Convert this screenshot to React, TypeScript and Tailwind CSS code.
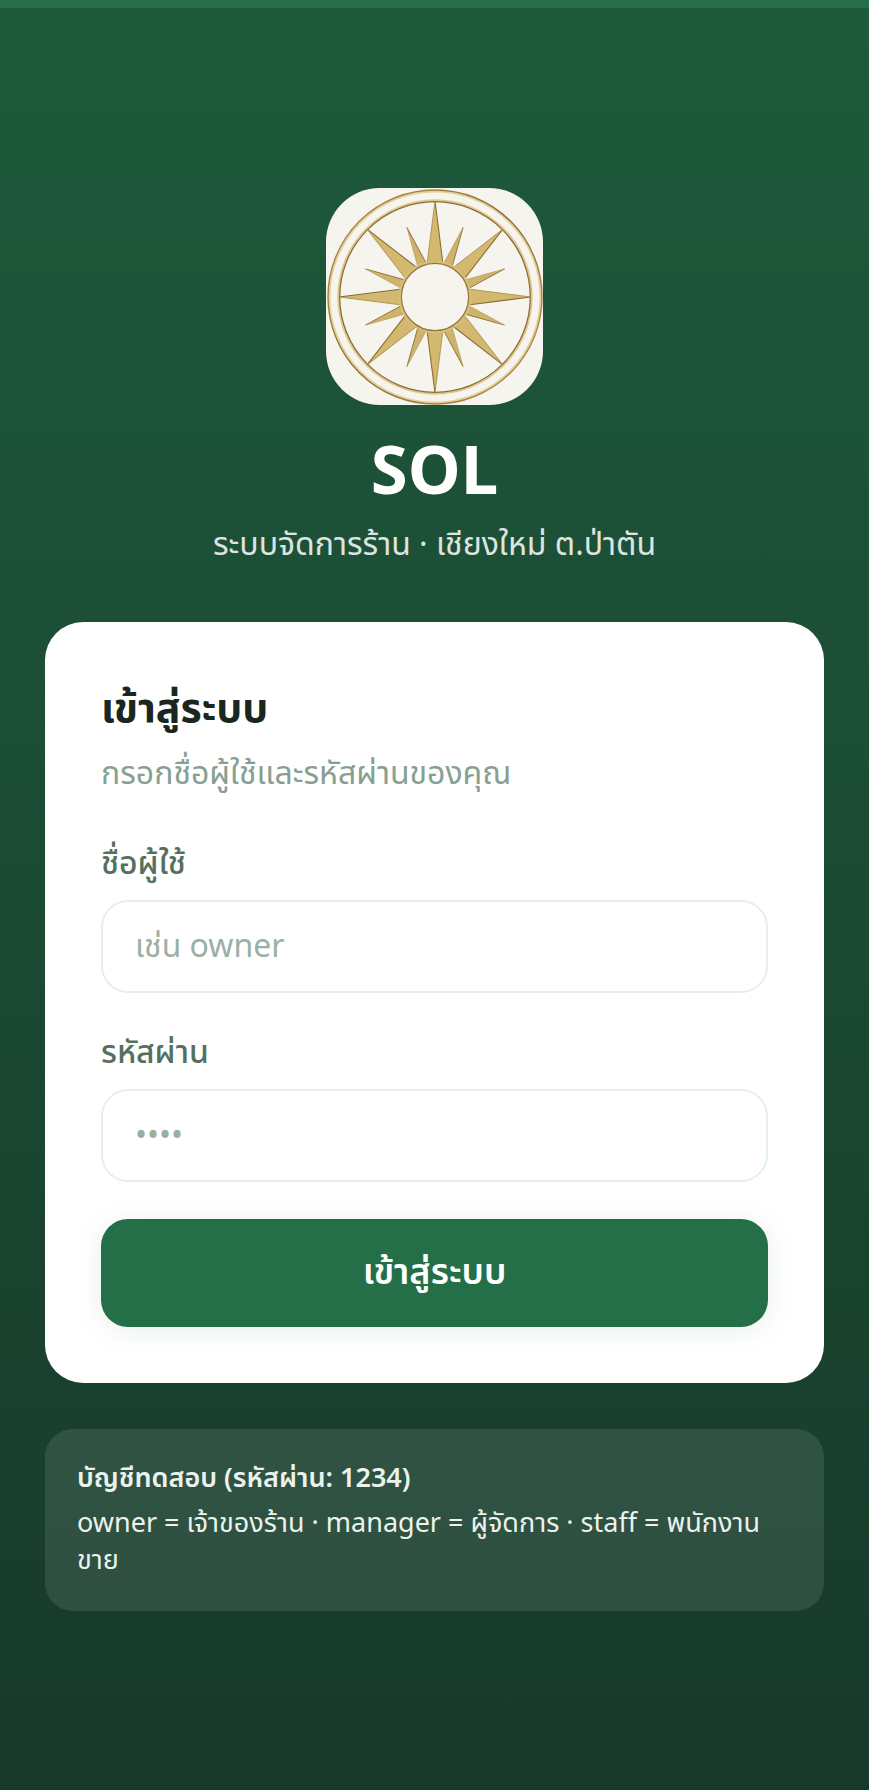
import { useState } from 'react';

const mainRays = [0, 45, 90, 135, 180, 225, 270, 315];
const minorRays = [22, 68, 112, 158, 202, 248, 292, 338];

const SunLogo = () => (
  <svg viewBox="0 0 217 217" className="block size-full" role="img" aria-label="SOL">
    <defs>
      <linearGradient id="gold" x1="0" y1="0" x2="1" y2="1">
        <stop offset="0" stopColor="#b8924a" />
        <stop offset="0.5" stopColor="#8f7038" />
        <stop offset="1" stopColor="#b8964f" />
      </linearGradient>
    </defs>
    <rect width="217" height="217" fill="#f6f4ef" />
    <circle cx="109" cy="109" r="105.8" fill="none" stroke="#e6d09a" strokeWidth="2.4" />
    <circle cx="109" cy="109" r="107" fill="none" stroke="url(#gold)" strokeWidth="1.4" />
    <circle cx="109" cy="109" r="96.6" fill="none" stroke="#dfc88c" strokeWidth="2.2" />
    <circle cx="109" cy="109" r="95.3" fill="none" stroke="#8a6d35" strokeWidth="1.3" />
    {minorRays.map(angle => (
      <g key={angle} transform={`rotate(${angle} 109 109)`}>
        <path d="M109 34 L104.5 74 H113.5 Z" fill="#cfb26b" />
        <path d="M109 34 L113.5 74" stroke="#8b753f" strokeWidth="0.9" />
        <path d="M109 34 L104.5 74" stroke="#b8974b" strokeWidth="0.6" />
      </g>
    ))}
    {mainRays.map(angle => (
      <g key={angle} transform={`rotate(${angle} 109 109)`}>
        <path d="M109 13 L101 76 H117 Z" fill="#d3b86f" />
        <path d="M109 13 L117 76" stroke="#8b6e31" strokeWidth="1.1" />
        <path d="M109 13 L101 76" stroke="#a98846" strokeWidth="0.8" />
      </g>
    ))}
    <circle cx="109" cy="109" r="34.8" fill="#f6f4ef" stroke="#d8bd7a" strokeWidth="3.4" />
    <circle cx="109" cy="109" r="33.6" fill="none" stroke="#94763b" strokeWidth="1.2" />
  </svg>
);

const fields = [
  { id: 'username', label: 'ชื่อผู้ใช้', type: 'text', placeholder: 'เช่น owner' },
  { id: 'password', label: 'รหัสผ่าน', type: 'password', placeholder: '••••' },
];

const App = () => {
  const [values, setValues] = useState<Record<string, string>>({ username: '', password: '' });

  return (
    <div className="min-h-screen flex flex-col border-t-8 border-[#246f48] bg-linear-to-b from-[#1e5a3c] via-[#1b4a33] to-[#17392a] font-['Noto_Sans','Noto_Sans_Thai',sans-serif]">
      <main className="grow flex flex-col justify-center px-[45px]">
        <header className="flex flex-col items-center text-center">
          <div className="size-[217px] rounded-[54px] overflow-hidden">
            <SunLogo />
          </div>
          <h1 className="mt-4 text-[67px] leading-[94px] font-bold text-white">SOL</h1>
          <p className="mt-1 text-[32px] leading-[48px] text-white/85">
            ระบบจัดการร้าน · เชียงใหม่ ต.ป่าตัน
          </p>
        </header>

        <form
          className="mt-[55px] rounded-[38px] bg-white p-14"
          onSubmit={e => e.preventDefault()}
        >
          <h2 className="text-[41px] leading-[56px] font-bold text-[#1a2721]">เข้าสู่ระบบ</h2>
          <p className="mt-[14px] mb-[42px] text-[32px] leading-[48px] text-[#87a092]">กรอกชื่อผู้ใช้และรหัสผ่านของคุณ</p>

          <div className="flex flex-col gap-[34px]">
            {fields.map(field => (
              <div key={field.id}>
                <label htmlFor={field.id} className="block text-[32px] leading-[48px] font-medium text-[#54715f]">
                  {field.label}
                </label>
                <input
                  id={field.id}
                  type={field.type}
                  placeholder={field.placeholder}
                  value={values[field.id]}
                  onChange={e => setValues({ ...values, [field.id]: e.target.value })}
                  className="mt-[14px] block w-full h-[93px] rounded-[27px] border-2 border-[#e4f1eb] bg-white px-8 pb-1 text-[32px] text-[#1a2721] placeholder:text-[#9bb0a5] outline-none focus:border-[#246f48]"
                />
              </div>
            ))}
          </div>

          <button
            type="submit"
            className="mt-[37px] block w-full h-[108px] rounded-[27px] bg-[#246f48] pb-1 text-[36px] font-semibold text-white shadow-[0_4px_28px_rgba(36,111,72,0.1)]"
          >
            เข้าสู่ระบบ
          </button>
        </form>

        <section className="mt-[46px] rounded-[28px] bg-white/10 px-8 pt-7 pb-[34px] text-[27px] text-[#eaf3ee]">
          <h3 className="leading-[40px] font-semibold">บัญชีทดสอบ (รหัสผ่าน: 1234)</h3>
          <p className="mt-[6px] leading-[37px]">
            owner = เจ้าของร้าน · manager = ผู้จัดการ · staff = พนักงานขาย
          </p>
        </section>
      </main>
    </div>
  );
};

export default App;
